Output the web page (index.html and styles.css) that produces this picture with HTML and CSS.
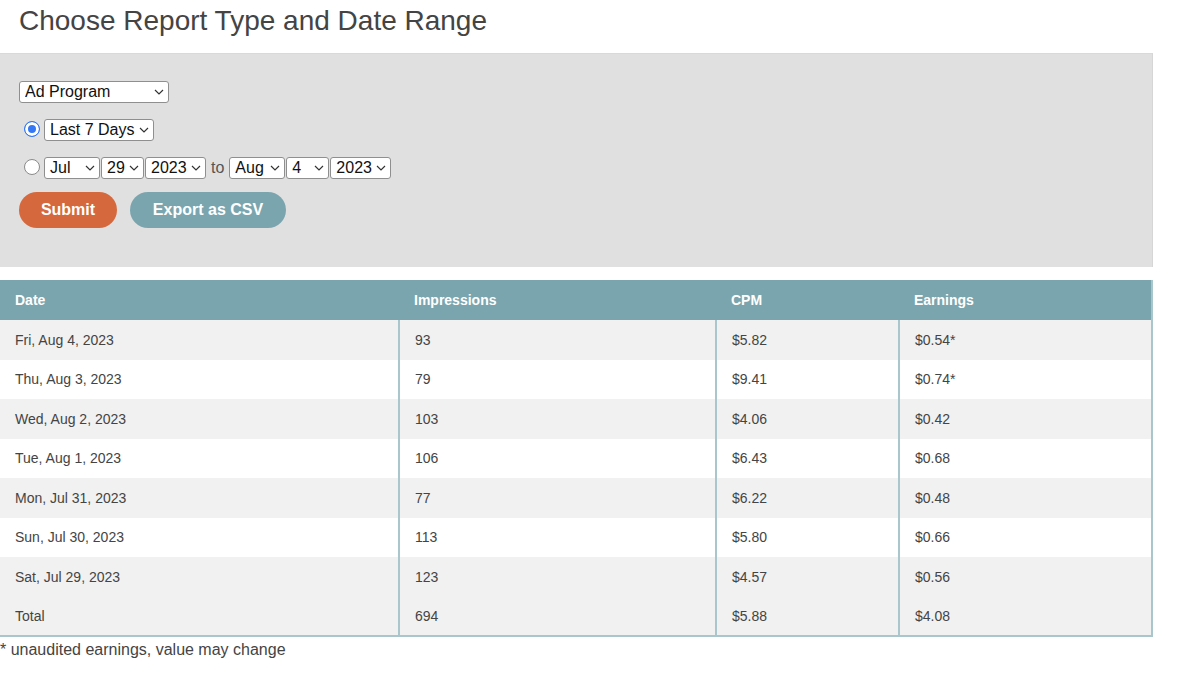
FILE: index.html
```html
<!DOCTYPE html>
<html lang="en">
<head>
<meta charset="utf-8">
<title>Choose Report Type and Date Range</title>
<link rel="stylesheet" href="styles.css">
</head>
<body>
<div class="page">
  <h1 class="title">Choose Report Type and Date Range</h1>
  <form class="panel">
    <div class="row">
      <span class="sel w-program"><select><option>Ad Program</option></select><svg class="chev" viewBox="0 0 10 6"><path d="M1 1l4 4 4-4"/></svg></span>
    </div>
    <div class="row">
      <span class="radio checked"></span>
      <span class="sel w-last"><select><option>Last 7 Days</option></select><svg class="chev" viewBox="0 0 10 6"><path d="M1 1l4 4 4-4"/></svg></span>
    </div>
    <div class="row">
      <span class="radio"></span>
      <span class="sel w-mon"><select><option>Jul</option></select><svg class="chev" viewBox="0 0 10 6"><path d="M1 1l4 4 4-4"/></svg></span>
      <span class="sel w-day"><select><option>29</option></select><svg class="chev" viewBox="0 0 10 6"><path d="M1 1l4 4 4-4"/></svg></span>
      <span class="sel w-year"><select><option>2023</option></select><svg class="chev" viewBox="0 0 10 6"><path d="M1 1l4 4 4-4"/></svg></span>
      <span class="to">to</span>
      <span class="sel w-mon"><select><option>Aug</option></select><svg class="chev" viewBox="0 0 10 6"><path d="M1 1l4 4 4-4"/></svg></span>
      <span class="sel w-day"><select><option>4</option></select><svg class="chev" viewBox="0 0 10 6"><path d="M1 1l4 4 4-4"/></svg></span>
      <span class="sel w-year"><select><option>2023</option></select><svg class="chev" viewBox="0 0 10 6"><path d="M1 1l4 4 4-4"/></svg></span>
    </div>
    <div class="buttons">
      <button type="button" class="btn btn-submit">Submit</button>
      <button type="button" class="btn btn-export">Export as CSV</button>
    </div>
  </form>
  <table class="report">
    <colgroup>
      <col class="c-date"><col class="c-imp"><col class="c-cpm"><col class="c-earn">
    </colgroup>
    <thead>
      <tr><th>Date</th><th>Impressions</th><th>CPM</th><th>Earnings</th></tr>
    </thead>
    <tbody>
      <tr class="alt"><td>Fri, Aug 4, 2023</td><td>93</td><td>$5.82</td><td>$0.54*</td></tr>
      <tr><td>Thu, Aug 3, 2023</td><td>79</td><td>$9.41</td><td>$0.74*</td></tr>
      <tr class="alt"><td>Wed, Aug 2, 2023</td><td>103</td><td>$4.06</td><td>$0.42</td></tr>
      <tr><td>Tue, Aug 1, 2023</td><td>106</td><td>$6.43</td><td>$0.68</td></tr>
      <tr class="alt"><td>Mon, Jul 31, 2023</td><td>77</td><td>$6.22</td><td>$0.48</td></tr>
      <tr><td>Sun, Jul 30, 2023</td><td>113</td><td>$5.80</td><td>$0.66</td></tr>
      <tr class="alt"><td>Sat, Jul 29, 2023</td><td>123</td><td>$4.57</td><td>$0.56</td></tr>
      <tr class="alt"><td>Total</td><td>694</td><td>$5.88</td><td>$4.08</td></tr>
    </tbody>
  </table>
  <p class="note">* unaudited earnings, value may change</p>
</div>
</body>
</html>
```

FILE: styles.css
```css
* { box-sizing: border-box; }

body {
  margin: 0;
  background: #ffffff;
  font-family: "Liberation Sans", Arial, Helvetica, sans-serif;
  color: #444444;
}

.page {
  width: 1153px;
}

.title {
  margin: 0;
  padding: 5px 19px 16px;
  height: 53px;
  font-size: 28px;
  line-height: 32px;
  font-weight: normal;
  color: #444444;
}

.panel {
  width: 1153px;
  height: 214px;
  background: #e0e0e0;
  border-top: 1px solid #d9d9d9;
  border-right: 1px solid #d6d6d6;
  padding: 27px 19px 0;
}

.row {
  display: flex;
  align-items: center;
  height: 22px;
  margin-bottom: 16px;
}

.radio {
  width: 16px;
  height: 16px;
  margin: 0 4px 0 5px;
  border-radius: 50%;
  border: 1px solid #8a8a8a;
  background: #ffffff;
  position: relative;
  top: -1px;
  flex: none;
}

.radio.checked {
  border-color: #3478f6;
  background: #3478f6;
  box-shadow: inset 0 0 0 3px #ffffff;
}

.sel {
  position: relative;
  display: inline-block;
  height: 22px;
  margin-right: 1px;
  flex: none;
}

.sel select {
  appearance: none;
  -webkit-appearance: none;
  width: 100%;
  height: 22px;
  margin: 0;
  padding: 0 0 0 5px;
  border: 1px solid #8f8f8f;
  border-radius: 3px;
  background: #ffffff;
  font-family: "Liberation Sans", Arial, Helvetica, sans-serif;
  font-size: 16px;
  line-height: 20px;
  color: #111111;
}

.chev {
  position: absolute;
  right: 5px;
  top: 8px;
  width: 10px;
  height: 6px;
  pointer-events: none;
  fill: none;
  stroke: #333333;
  stroke-width: 1.2;
}

.w-program { width: 150px; }
.w-last { width: 110px; }
.w-mon { width: 56px; }
.w-day { width: 43px; }
.w-year { width: 61px; }

.to {
  font-size: 16px;
  color: #555555;
  margin: 0 5px 0 4px;
}

.buttons {
  display: flex;
  gap: 13px;
  margin-top: -3px;
}

.btn {
  height: 36px;
  border: none;
  border-radius: 18px;
  padding: 0 21px;
  font-family: "Liberation Sans", Arial, Helvetica, sans-serif;
  font-size: 16px;
  font-weight: bold;
  color: #ffffff;
  cursor: pointer;
}

.btn-submit {
  width: 98px;
  background: #d5683c;
}

.btn-export {
  width: 156px;
  background: #7aa5ae;
}

.report {
  margin-top: 13px;
  width: 1152px;
  border-collapse: collapse;
  table-layout: fixed;
  font-size: 14px;
  border-right: 2px solid #a9c6cc;
  border-bottom: 2px solid #a9c6cc;
}

.c-date { width: 399px; }
.c-imp { width: 317px; }
.c-cpm { width: 183px; }
.c-earn { width: 253px; }

.report th {
  height: 40px;
  background: #7aa5ae;
  color: #ffffff;
  font-weight: bold;
  text-align: left;
  padding: 0 15px;
}

.report td {
  height: 39.5px;
  padding: 0 15px;
  color: #444444;
  background: #ffffff;
  border-left: 2px solid #a9c6cc;
}

.report td:first-child {
  border-left: none;
}

.report tr.alt td {
  background: #f1f1f1;
}

.note {
  margin: 3px 0 0;
  font-size: 16px;
  line-height: 20px;
  color: #444444;
}
```
